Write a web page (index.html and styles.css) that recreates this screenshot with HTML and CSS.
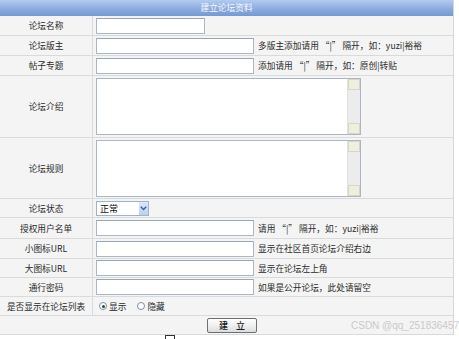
FILE: index.html
```html
<!DOCTYPE html>
<html lang="zh-CN">
<head>
<meta charset="utf-8">
<title>建立论坛资料</title>
<link rel="stylesheet" href="styles.css">
</head>
<body>
<div class="page">
  <div class="form">
    <div class="head">建立论坛资料</div>
    <div class="row"><div class="lab">论坛名称</div><div class="val"><input class="txt short" type="text"></div></div>
    <div class="row"><div class="lab">论坛版主</div><div class="val"><input class="txt" type="text"><span class="hint">多版主添加请用 “|” 隔开，如：yuzi|裕裕</span></div></div>
    <div class="row"><div class="lab">帖子专题</div><div class="val"><input class="txt" type="text"><span class="hint">添加请用 “|” 隔开，如：原创|转贴</span></div></div>
    <div class="row tall"><div class="lab">论坛介绍</div><div class="val top">
      <div class="ta"><textarea></textarea><div class="sb"><span class="sbtn"></span><span class="strack"></span><span class="sbtn"></span></div></div>
    </div></div>
    <div class="row tall2"><div class="lab">论坛规则</div><div class="val top">
      <div class="ta"><textarea></textarea><div class="sb"><span class="sbtn"></span><span class="strack"></span><span class="sbtn"></span></div></div>
    </div></div>
    <div class="row s"><div class="lab">论坛状态</div><div class="val">
      <div class="sel"><span class="seltext">正常</span><span class="arrow"><svg width="7" height="5" viewBox="0 0 7 5"><path d="M0.8 0.8 L3.5 3.6 L6.2 0.8" fill="none" stroke="#3a5fa8" stroke-width="1.4"/></svg></span></div>
    </div></div>
    <div class="row w"><div class="lab">授权用户名单</div><div class="val"><input class="txt" type="text"><span class="hint">请用 “|” 隔开，如：yuzi|裕裕</span></div></div>
    <div class="row"><div class="lab">小图标URL</div><div class="val"><input class="txt" type="text"><span class="hint">显示在社区首页论坛介绍右边</span></div></div>
    <div class="row s"><div class="lab">大图标URL</div><div class="val"><input class="txt" type="text"><span class="hint">显示在论坛左上角</span></div></div>
    <div class="row s"><div class="lab">通行密码</div><div class="val"><input class="txt" type="text"><span class="hint">如果是公开论坛，此处请留空</span></div></div>
    <div class="row s"><div class="lab">是否显示在论坛列表</div><div class="val radios">
      <span class="radio on"></span><span class="rlabel">显示</span>
      <span class="radio"></span><span class="rlabel">隐藏</span>
    </div></div>
    <div class="row s btnrow"><button class="btn" type="button">建 立</button></div>
  </div>
  <div class="mark"></div>
  <div class="wm">CSDN @qq_251836457</div>
</div>
</body>
</html>
```

FILE: styles.css
```css
html, body {
  margin: 0;
  padding: 0;
  background: #ffffff;
}
.page {
  position: relative;
  width: 459px;
  height: 339px;
  overflow: hidden;
  font-family: "Noto Sans CJK SC", "Noto Sans", sans-serif;
  font-size: 8.7px;
  color: #2a2a2a;
}
.form {
  width: 454px;
  box-sizing: border-box;
  border-right: 1px solid #d6d6d6;
  background: #f4f4f4;
}
.head {
  height: 16px;
  line-height: 16px;
  text-align: center;
  color: #f4f8ff;
  font-size: 8.7px;
  background: linear-gradient(#b2cbee, #89aadd 60%, #7399d3);
}
.row {
  display: grid;
  grid-template-columns: 93px 1fr;
  height: 20px;
  box-sizing: border-box;
  border-bottom: 1px solid #dadada;
}
.row.s { height: 19px; }
.row.w { height: 21px; }
.row.tall { height: 62px; }
.row.tall2 { height: 61px; }
.lab {
  display: flex;
  align-items: center;
  justify-content: center;
  border-right: 1px solid #dadada;
  white-space: nowrap;
}
.val {
  display: flex;
  align-items: center;
  gap: 4px;
  padding-left: 3px;
  white-space: nowrap;
}
.val.top {
  align-items: flex-start;
  padding-top: 2px;
}
.txt {
  width: 158px;
  height: 16px;
  box-sizing: border-box;
  margin: 0;
  border: 1px solid #a9b7c8;
  border-top-color: #98a6b8;
  background: #ffffff;
  padding: 0;
}
.txt.short { width: 109px; }
.hint { color: #2a2a2a; }
.ta {
  display: flex;
  width: 265px;
  height: 57px;
  box-sizing: border-box;
  border: 1px solid #a9b7c8;
  background: #ffffff;
}
.ta textarea {
  flex: 1;
  border: none;
  resize: none;
  margin: 0;
  padding: 0;
  outline: none;
  background: #ffffff;
}
.sb {
  width: 12px;
  display: flex;
  flex-direction: column;
  background: #ececec;
  border-left: 1px solid #e2e2e2;
}
.sbtn {
  height: 11px;
  background: #f0eedf;
  border: 1px solid #d8d6c4;
  box-sizing: border-box;
}
.strack { flex: 1; }
.sel {
  display: flex;
  align-items: center;
  width: 53px;
  height: 15px;
  box-sizing: border-box;
  border: 1px solid #9fb3cf;
  background: #ffffff;
  margin-top: 1px;
}
.seltext {
  flex: 1;
  padding-left: 3px;
  font-size: 9px;
  color: #111;
}
.arrow {
  width: 9px;
  height: 13px;
  display: flex;
  align-items: center;
  justify-content: center;
  background: linear-gradient(#dde7f8, #bccff0);
}
.radios { gap: 0; padding-left: 6px; }
.radio {
  width: 8px;
  height: 8px;
  box-sizing: border-box;
  border: 1px solid #7d8ea5;
  border-radius: 50%;
  background: #ffffff;
  display: flex;
  align-items: center;
  justify-content: center;
}
.radio.on::after {
  content: "";
  width: 3px;
  height: 3px;
  border-radius: 50%;
  background: #2b4d2b;
}
.rlabel { margin: 0 11px 0 2px; }
.btnrow {
  display: flex;
  align-items: center;
  padding-left: 207px;
}
.btn {
  width: 50px;
  height: 15px;
  padding: 0;
  margin: 0;
  box-sizing: border-box;
  border: 1px solid #6f6f6f;
  border-radius: 2px;
  background: linear-gradient(#ffffff, #ececec 60%, #dcdcdc);
  font-family: "Noto Sans CJK SC", sans-serif;
  font-size: 9px;
  font-weight: 500;
  letter-spacing: 3px;
  text-indent: 3px;
  color: #1a1a1a;
  line-height: 13px;
}
.mark {
  margin-left: 165px;
  width: 10px;
  height: 10px;
  box-sizing: border-box;
  border: 1px solid #333333;
  background: #ffffff;
}
.wm {
  position: absolute;
  top: 320px;
  left: 351px;
  font-family: "Liberation Sans", Arial, sans-serif;
  font-size: 10px;
  color: #cacaca;
  white-space: nowrap;
}
```
